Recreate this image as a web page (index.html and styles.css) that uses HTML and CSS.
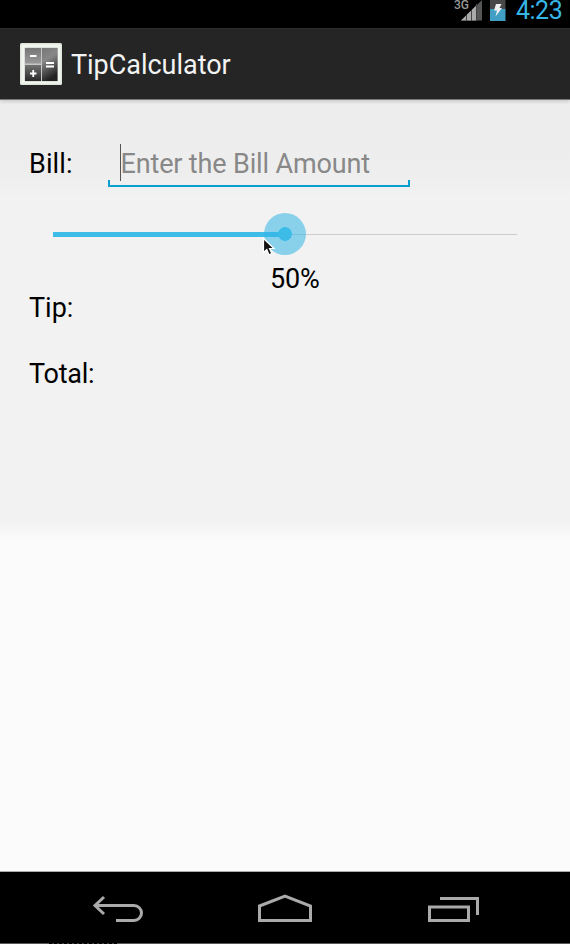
FILE: index.html
```html
<!DOCTYPE html>
<html lang="en">
<head>
<meta charset="utf-8">
<title>TipCalculator</title>
<link rel="stylesheet" href="styles.css">
</head>
<body>
<div class="phone">
  <div class="status-bar">
    <svg class="signal" width="30" height="28" viewBox="0 0 30 28">
      <path d="M8 20.500 29 0V20.500Z" fill="#555"/>
      <path d="M8 20.500 23.500 5.300V20.500Z" fill="#aaa"/>
      <path d="M13.500 15v6M18.500 10v11M23.500 4v17" stroke="#444" stroke-width="1"/>
      <text x="1" y="8.500" class="network">3G</text>
    </svg>
    <svg class="battery" width="16" height="28" viewBox="0 0 16 28">
      <path d="M0 0H15.500V9H0Z" fill="#484848"/>
      <path d="M0 9H15.500V21H0Z" fill="#419fc5"/>
      <path d="M6 4H11.500L9.500 8H12L5.500 16.500 7 10.500H4Z" fill="#f0f0f0"/>
    </svg>
    <span class="clock">4:23</span>
  </div>
  <header class="action-bar">
    <svg class="app-icon" width="42" height="42" viewBox="0 0 42 42">
      <defs>
        <linearGradient id="key" x1="0" y1="0" x2="0.300" y2="1"><stop offset="0" stop-color="#777"/><stop offset=".4" stop-color="#888"/><stop offset="1" stop-color="#222"/></linearGradient>
        <linearGradient id="key-minus" x1="0" y1="0" x2="0" y2="1"><stop offset="0" stop-color="#777"/><stop offset="1" stop-color="#999"/></linearGradient>
        <linearGradient id="key-plus" x1="0" y1="0" x2="0" y2="1"><stop offset="0" stop-color="#727272"/><stop offset="1" stop-color="#292929"/></linearGradient>
      </defs>
      <rect width="42" height="42" rx="1.500" fill="#dfe5dc"/>
      <rect x="1.500" y="1.500" width="39" height="39" rx="1" fill="#f1f6ef"/>
      <rect x="4.500" y="4.500" width="33.500" height="34" rx="1" fill="#c4c8c3"/>
      <rect x="5" y="5" width="16" height="15.500" fill="url(#key-minus)"/>
      <rect x="5" y="22" width="16" height="16" fill="url(#key-plus)"/>
      <rect x="22" y="5" width="15.500" height="33" fill="url(#key)"/>
      <path d="M10 13h6.500M10 30.500h6.500M13.250 27v7M26 20h8M26 23.500h8" stroke="#fff" stroke-width="1.800" fill="none"/>
    </svg>
    <h1 class="title">TipCalculator</h1>
  </header>
  <main class="content">
    <div class="row bill-row">
      <span class="label bill">Bill:</span>
      <div class="field"><span class="hint">Enter the Bill Amount</span></div>
    </div>
    <div class="seek">
      <div class="track"></div>
      <div class="progress"></div>
      <div class="thumb"></div>
      <svg class="pointer" width="14" height="20" viewBox="0 0 14 20"><path d="M1.500 1.500V15.500L4.800 12.500 7 17.800 9.800 16.600 7.500 11.500H12Z" fill="#111" stroke="#fff" stroke-width="1.200"/></svg>
    </div>
    <div class="percent">50%</div>
    <div class="label tip">Tip:</div>
    <div class="label total">Total:</div>
  </main>
  <nav class="nav-bar">
    <svg width="570" height="71" viewBox="0 0 570 71" fill="none" stroke="#aaa" stroke-width="3">
      <path d="M95 33.500H134a7 7 0 0 1 0 15H116M104 25 95 33.500 104 42"/>
      <path d="M259.500 34 285 24 310.500 34V48.500H259.500Z"/>
      <path d="M429.500 35H468.500V48.500H429.500ZM440 26.500H477.500V43"/>
    </svg>
  </nav>
  <div class="bottom-edge"><div class="edge-marks"></div></div>
</div>
</body>
</html>
```

FILE: styles.css
```css
* { box-sizing: border-box; }
body { margin: 0; font-family: Roboto, "Liberation Sans", sans-serif; font-size: 27px; line-height: 32px; color: #000; }
.phone { width: 570px; height: 944px; display: flex; flex-direction: column; overflow: hidden; }
.status-bar { height: 28px; background: #000; display: flex; justify-content: flex-end; padding-right: 8px; }
.signal { margin-right: 7px; overflow: visible; }
.network { font: 500 12px Roboto, sans-serif; fill: #999; }
.battery { margin-right: 10px; }
.clock { color: #35b5e5; font-size: 25px; line-height: 22px; letter-spacing: -0.5px; width: 46px; white-space: nowrap; }
.action-bar { height: 72px; background: #252525; border-top: 1px solid #303030; border-bottom: 1px solid #777; display: flex; align-items: center; padding-left: 20px; box-shadow: 0 2px 3px #0002; z-index: 1; }
.app-icon { margin-right: 9px; }
.title { margin: 2px 0 0; color: #f3f3f3; font-size: 27px; font-weight: 400; letter-spacing: -0.03px; white-space: nowrap; }
.content { height: 771px; padding-top: 44px; background: linear-gradient(#ededed 0, #eee 75px, #f2f2f2 100px, #f2f2f2 422px, #fbfbfb 440px, #fbfbfb); }
.row { display: flex; height: 44px; }
.label { padding-left: 29px; height: 32px; }
.bill-row .label { width: 108px; margin-top: 4px; letter-spacing: 0.1px; }
.field { width: 302px; height: 43px; border-bottom: 2px solid #099fd0; padding-left: 12px; background: linear-gradient(#099fd0, #099fd0) 0 100% / 2px 5px no-repeat, linear-gradient(#099fd0, #099fd0) 100% 100% / 2px 5px no-repeat; }
.hint { display: block; height: 37px; line-height: 40px; color: #888; border-left: 1px solid #555; letter-spacing: -0.15px; text-indent: -0.5px; white-space: nowrap; }
.seek { position: relative; height: 75px; }
.track { position: absolute; left: 53px; top: 46px; width: 464px; height: 1px; background: #ccc; }
.progress { position: absolute; left: 53px; top: 44px; width: 232px; height: 5px; background: #3dbce8; }
.thumb { position: absolute; left: 264px; top: 25px; width: 42px; height: 42px; border-radius: 50%; background: radial-gradient(circle, #3dbce8 6.5px, #33b5e58c 7.2px); }
.pointer { position: absolute; left: 262px; top: 49px; }
.percent { padding-left: 270px; height: 29px; letter-spacing: -0.15px; }
.total { margin-top: 34px; letter-spacing: -0.25px; }
.nav-bar { height: 72px; background: #000; border-top: 1px solid #aaa; }
.nav-bar svg { display: block; }
.bottom-edge { height: 1px; padding-left: 49px; background: #555; }
.edge-marks { width: 68px; height: 1px; background: repeating-linear-gradient(90deg, #000 0 3px, #444 3px 5px); }
```
